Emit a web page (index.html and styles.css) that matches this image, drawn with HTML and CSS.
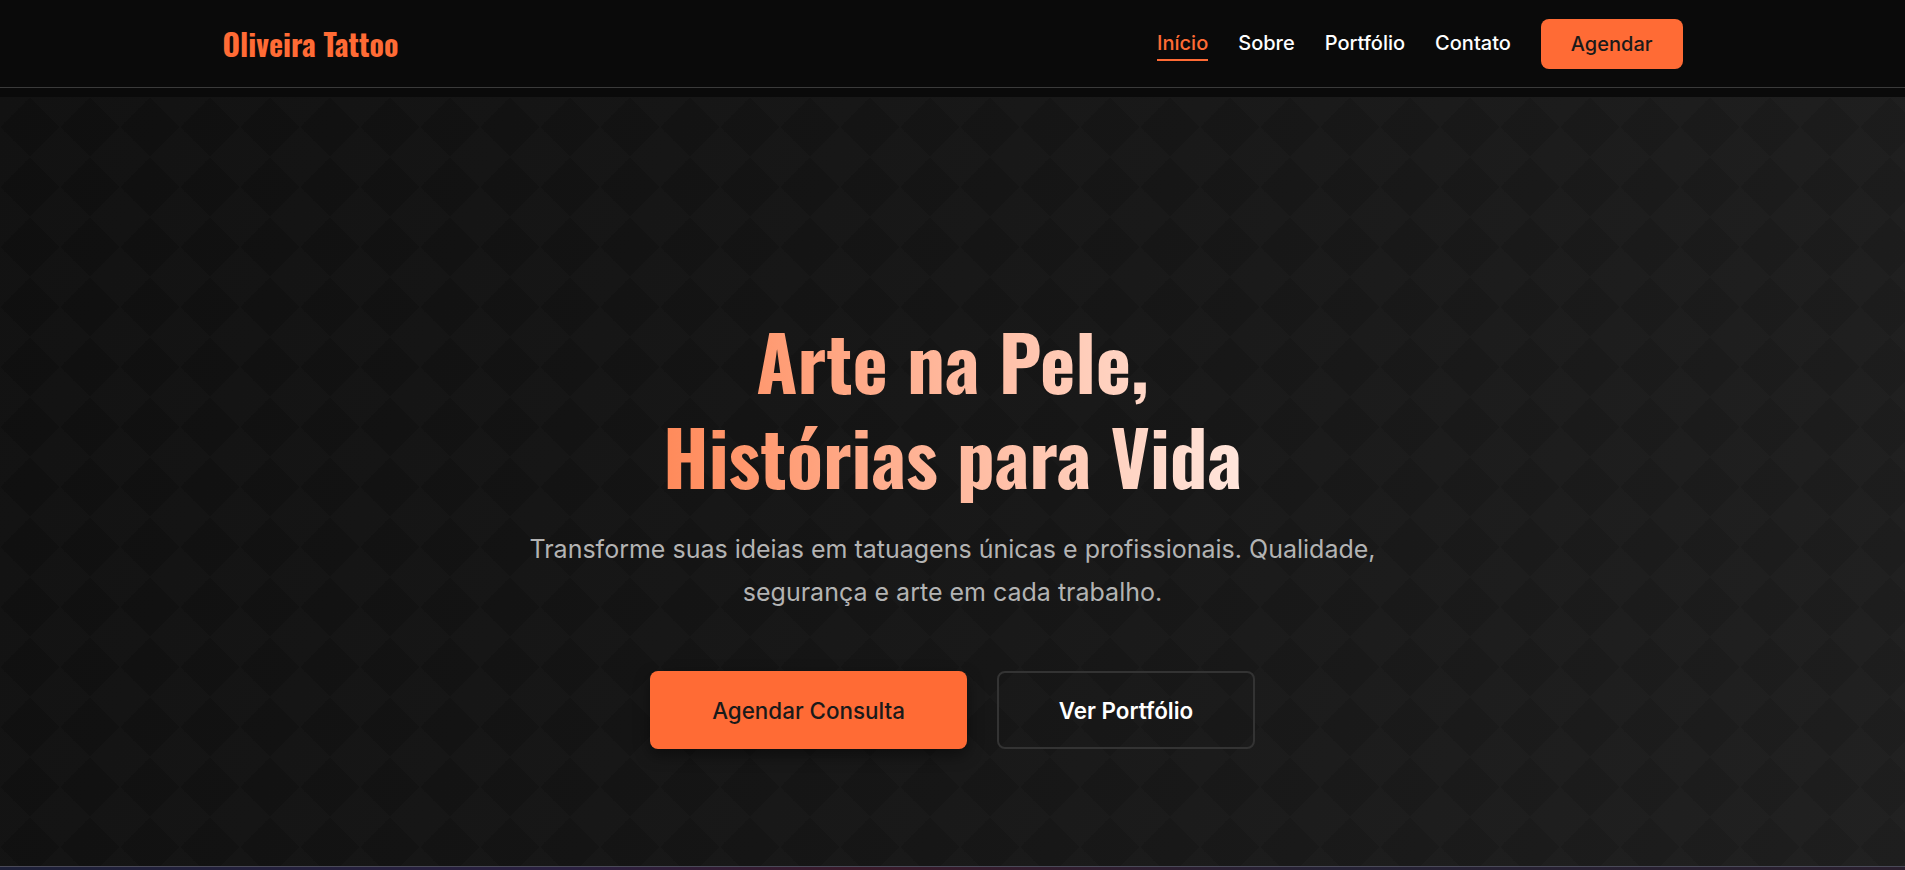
FILE: index.html
```html
<!DOCTYPE html>
<html lang="pt-BR">
<head>
<meta charset="utf-8">
<title>Oliveira Tattoo</title>
<link rel="stylesheet" href="styles.css">
</head>
<body>
<header class="site-header">
  <div class="container header-inner">
    <a class="logo" href="#">Oliveira Tattoo</a>
    <nav class="nav">
      <a class="nav-link active" href="#">Início</a>
      <a class="nav-link" href="#">Sobre</a>
      <a class="nav-link" href="#">Portfólio</a>
      <a class="nav-link" href="#">Contato</a>
      <a class="nav-cta" href="#">Agendar</a>
    </nav>
  </div>
</header>
<div class="header-spacer"></div>
<section class="hero">
  <div class="hero-content">
    <h1 class="hero-title">Arte na Pele,<br>Histórias para Vida</h1>
    <p class="hero-text">Transforme suas ideias em tatuagens únicas e profissionais. Qualidade,<br>segurança e arte em cada trabalho.</p>
    <div class="hero-actions">
      <a class="btn btn-primary" href="#">Agendar Consulta</a>
      <a class="btn btn-outline" href="#">Ver Portfólio</a>
    </div>
  </div>
</section>
<section class="next-section"></section>
</body>
</html>
```
FILE: styles.css
```css
html, body {
  margin: 0;
  padding: 0;
  height: 870px;
  overflow: hidden;
}
body {
  background: #0a0a0a;
  font-family: Inter, "Noto Sans", sans-serif;
  color: #fff;
}
a { text-decoration: none; }

.site-header {
  height: 87px;
  background: #0a0a0a;
  border-bottom: 1px solid #3a3a3a;
}
.container {
  max-width: 1460px;
  margin: 0 auto;
}
.header-inner {
  height: 100%;
  display: flex;
  align-items: center;
  justify-content: space-between;
}
.logo {
  font-family: "Oswald", "Liberation Sans Narrow", "DejaVu Sans Condensed", sans-serif;
  font-weight: 700;
  font-size: 30px;
  color: #ff6b35;
}
.nav {
  display: flex;
  align-items: center;
  gap: 30px;
}
.nav-link {
  color: #ffffff;
  font-size: 20px;
  font-weight: 500;
  padding: 4px 0;
  border-bottom: 2px solid transparent;
}
.nav-link.active {
  color: #ff6b35;
  border-bottom-color: #ff6b35;
}
.nav-cta {
  background: #ff6b35;
  color: #1a1a1a;
  font-size: 20px;
  font-weight: 500;
  height: 50px;
  padding: 0 30px;
  border-radius: 8px;
  display: flex;
  align-items: center;
}
.header-spacer {
  height: 9px;
  background: #0a0a0a;
}

.hero {
  height: 769px;
  box-sizing: border-box;
  padding-top: 216px;
  display: flex;
  flex-direction: column;
  align-items: center;
  background-color: #141414;
  background-image:
    linear-gradient(45deg, rgba(255,255,255,0.01) 25%, transparent 25%, transparent 75%, rgba(255,255,255,0.01) 75%),
    linear-gradient(-45deg, rgba(255,255,255,0.01) 25%, transparent 25%, transparent 75%, rgba(255,255,255,0.01) 75%),
    linear-gradient(110deg, #0f0f0f 0%, #161616 55%, #1e1e1e 100%);
  background-size: 60px 60px, 60px 60px, 100% 100%;
}
.hero-content {
  display: flex;
  flex-direction: column;
  align-items: center;
  text-align: center;
}
.hero-title {
  margin: 0;
  font-family: "Oswald", "Liberation Sans Narrow", "DejaVu Sans Condensed", sans-serif;
  font-weight: 700;
  font-size: 75px;
  line-height: 95px;
  background: linear-gradient(90deg, #ff8a5a 0%, #ffb497 45%, #ffe6dc 100%);
  -webkit-background-clip: text;
  background-clip: text;
  color: transparent;
}
.hero-text {
  margin: 25px 0 0;
  font-size: 25px;
  line-height: 43px;
  color: #b3b3b3;
  font-weight: 400;
}
.hero-actions {
  margin-top: 57px;
  display: flex;
  gap: 30px;
}
.btn {
  height: 78px;
  box-sizing: border-box;
  display: flex;
  align-items: center;
  justify-content: center;
  border-radius: 8px;
  font-size: 22.4px;
}
.btn-primary {
  width: 317px;
  background: #ff6b35;
  color: #1a1a1a;
  font-weight: 500;
  box-shadow: 0 6px 16px rgba(0,0,0,0.45);
}
.btn-outline {
  width: 258px;
  border: 2px solid #333333;
  color: #ffffff;
  font-weight: 600;
}
.next-section {
  height: 3px;
  border-top: 1px solid #4a4a58;
  background: linear-gradient(90deg, #1d2038 0%, #2a2040 30%, #3a1a2a 45%, #252235 70%, #2a1f2e 100%);
}
```
